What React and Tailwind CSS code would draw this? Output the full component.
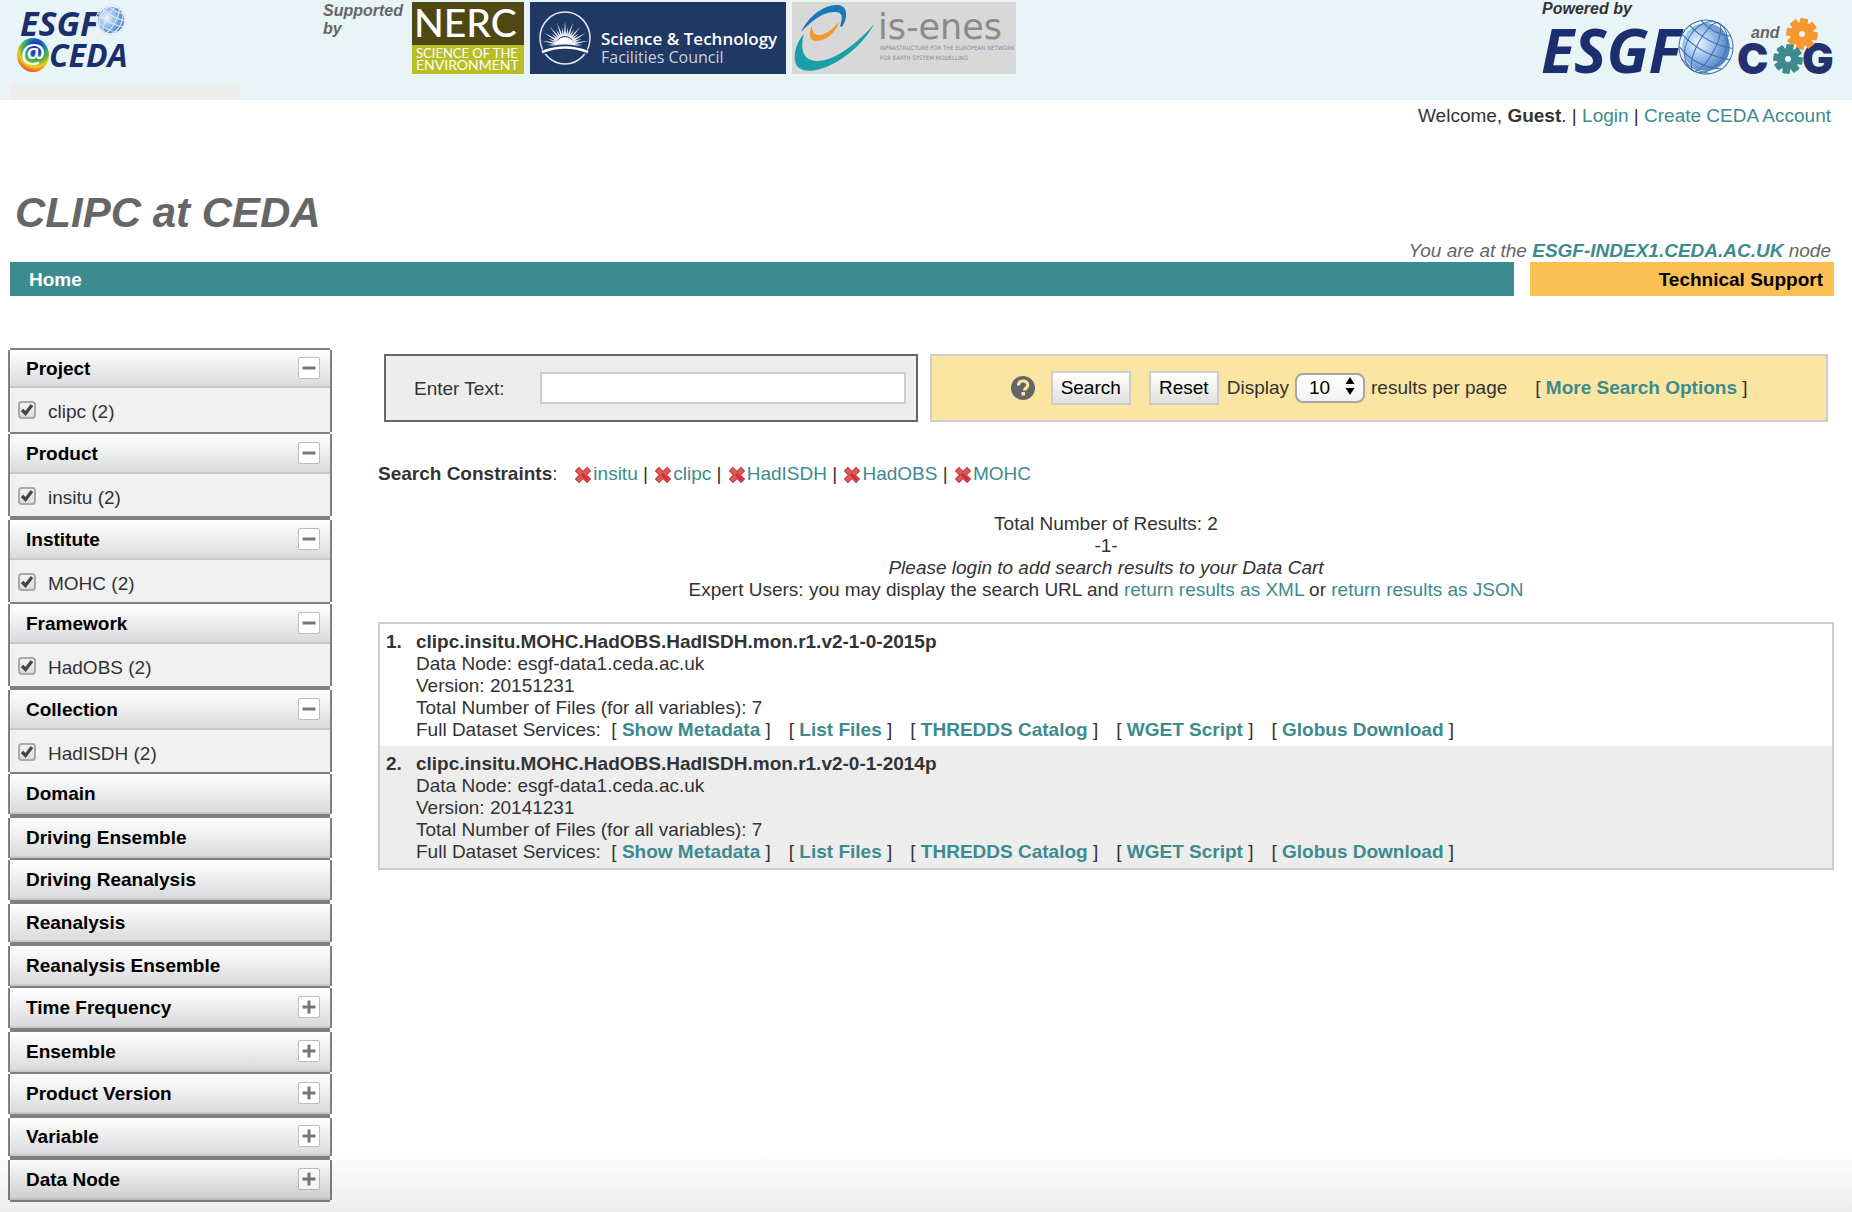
import React from "react";

const NB = "\u00a0";

const facets = [
  { name: "Project", option: "clipc (2)", short: true },
  { name: "Product", option: "insitu (2)", thick: true },
  { name: "Institute", option: "MOHC (2)" },
  { name: "Framework", option: "HadOBS (2)", thick: true },
  { name: "Collection", option: "HadISDH (2)" },
  { name: "Domain", thick: true },
  { name: "Driving Ensemble" },
  { name: "Driving Reanalysis", thick: true },
  { name: "Reanalysis", thick: true, short: true },
  { name: "Reanalysis Ensemble" },
  { name: "Time Frequency", more: true, thick: true },
  { name: "Ensemble", more: true },
  { name: "Product Version", more: true, thick: true },
  { name: "Variable", more: true, thick: true, short: true },
  { name: "Data Node", more: true },
];

const constraints = ["insitu", "clipc", "HadISDH", "HadOBS", "MOHC"];

const results = [
  { id: "clipc.insitu.MOHC.HadOBS.HadISDH.mon.r1.v2-1-0-2015p", version: "20151231" },
  { id: "clipc.insitu.MOHC.HadOBS.HadISDH.mon.r1.v2-0-1-2014p", version: "20141231" },
];

const services = ["Show Metadata", "List Files", "THREDDS Catalog", "WGET Script", "Globus Download"];

function Globe({ id, cx, cy, r, line, width }) {
  return (
    <g transform={`translate(${cx} ${cy}) rotate(28)`}>
      <defs>
        <radialGradient id={id} cx="0.32" cy="0.5" r="0.75">
          <stop offset="0" stopColor="#eef6ff" />
          <stop offset="0.4" stopColor="#9cc3ec" />
          <stop offset="1" stopColor="#3a6cb5" />
        </radialGradient>
      </defs>
      <circle r={r * 0.88} fill={`url(#${id})`} />
      <g fill="none" stroke={line} strokeWidth={width}>
        <circle r={r} />
        <ellipse rx={r * 0.72} ry={r} />
        <ellipse rx={r * 0.32} ry={r} />
        <path d={`M${-r} 0 Q0 ${r * 0.35} ${r} 0`} />
        <path d={`M${-r * 0.9} ${-r * 0.42} Q0 ${-r * 0.12} ${r * 0.9} ${-r * 0.42}`} />
        <path d={`M${-r * 0.88} ${r * 0.45} Q0 ${r * 0.85} ${r * 0.88} ${r * 0.45}`} />
        <path d={`M${-r * 0.62} ${-r * 0.78} Q0 ${-r * 0.55} ${r * 0.62} ${-r * 0.78}`} />
        <path d={`M${-r * 0.6} ${r * 0.8} Q0 ${r * 1.02} ${r * 0.6} ${r * 0.8}`} />
      </g>
    </g>
  );
}

function EsgfCedaLogo() {
  return (
    <svg className="overflow-visible" width="130" height="74" viewBox="0 0 130 74" role="img" aria-label="ESGF at CEDA">
      <defs>
        <radialGradient id="rainbow" cx="0.58" cy="0.28" r="0.78">
          <stop offset="0" stopColor="#1420a8" />
          <stop offset="0.28" stopColor="#1c50c8" />
          <stop offset="0.42" stopColor="#25a08a" />
          <stop offset="0.56" stopColor="#6cb82c" />
          <stop offset="0.72" stopColor="#f0d020" />
          <stop offset="0.86" stopColor="#ee7a1c" />
          <stop offset="1" stopColor="#d42020" />
        </radialGradient>
      </defs>
      <text x="10" y="36" fill="#1b2f6e" fontFamily="Open Sans" fontSize="34" fontWeight="700" fontStyle="italic">ESGF</text>
      <Globe id="globe-small" cx={101} cy={20} r={15} line="#dfeaf5" width={1} />
      <ellipse cx="23" cy="55" rx="16" ry="17" fill="url(#rainbow)" />
      <text x="23" y="63" textAnchor="middle" fill="#fff" fontFamily="Open Sans" fontSize="27" fontWeight="600">@</text>
      <text x="39" y="67" fill="#1b2f6e" fontFamily="Open Sans" fontSize="32" fontWeight="700" fontStyle="italic">CEDA</text>
    </svg>
  );
}

function NercLogo() {
  return (
    <svg className="overflow-visible" width="112" height="72" viewBox="0 0 112 72" role="img" aria-label="NERC Science of the Environment">
      <rect width="112" height="72" fill="#b9be26" />
      <rect width="112" height="43" fill="#4f4815" />
      <g fill="#fff" fontFamily="Lato">
        <text x="2" y="35" fontSize="39" fontWeight="500">NERC</text>
        <text x="4" y="56" fontSize="13">SCIENCE OF THE</text>
        <text x="4" y="68" fontSize="14">ENVIRONMENT</text>
      </g>
    </svg>
  );
}

function StfcLogo() {
  const rays = Array.from({ length: 19 }, (_, i) => {
    const angle = Math.PI * (i / 18);
    const length = i % 2 ? 24 : 18;
    const tip = [35 - Math.cos(angle) * length, 43 - Math.sin(angle) * length];
    const a = [35 - Math.cos(angle - 0.12) * 9, 43 - Math.sin(angle - 0.12) * 9];
    const b = [35 - Math.cos(angle + 0.12) * 9, 43 - Math.sin(angle + 0.12) * 9];
    return `M${a.join(" ")}L${tip.join(" ")}L${b.join(" ")}Z`;
  }).join("");
  return (
    <svg width="256" height="72" viewBox="0 0 256 72" role="img" aria-label="Science and Technology Facilities Council">
      <rect width="256" height="72" fill="#1f3864" />
      <ellipse cx="35" cy="36" rx="25" ry="26" fill="none" stroke="#dfe6f0" strokeWidth="1.5" />
      <path d={rays} fill="#e8edf5" />
      <path d="M25 45a10 10 0 0 1 20 0Z" fill="#fff" />
      <path d="M13 50q22-10 44 0" fill="none" stroke="#1f3864" strokeWidth="5" />
      <path d="M12 50q23-9 46 0" fill="none" stroke="#fff" strokeWidth="2.5" />
      <text x="71" y="43" fill="#fff" fontFamily="Open Sans" fontSize="17" fontWeight="600">Science &amp; Technology</text>
      <text x="71" y="61" fill="#c9d1de" fontFamily="Open Sans" fontSize="16">Facilities Council</text>
    </svg>
  );
}

function IsEnesLogo() {
  return (
    <svg className="overflow-visible" width="224" height="72" viewBox="0 0 224 72" role="img" aria-label="is-enes">
      <rect width="224" height="72" fill="#d8d8d8" />
      <path d="M9 30C16 15 32 2 46 3c9 1 11 11 4 22l-2-1C51 16 51 10 43 10 33 9 20 18 9 30Z" fill="#1878b8" />
      <path d="M20 24c-3 6-4 15 5 15 9 0 19-9 22-19-6 6-12 13-20 13-5 0-7-3-7-9Z" fill="#f3982d" />
      <path d="M12 32C2 43 0 59 6 65c16 14 61-13 76-43C67 40 42 60 24 59 10 58 8 45 12 32Z" fill="#1a9fa8" />
      <g fill="#8a8a8a">
        <text x="86" y="37" fontFamily="DejaVu Sans" fontSize="35">is-enes</text>
        <g fontFamily="Liberation Sans Narrow, DejaVu Sans Condensed" fontSize="6">
          <text x="88" y="48">INFRASTRUCTURE FOR THE EUROPEAN NETWORK</text>
          <text x="88" y="58">FOR EARTH SYSTEM MODELLING</text>
        </g>
      </g>
    </svg>
  );
}

function gearPath(cx, cy, outer, inner, hole) {
  const points = [];
  for (let i = 0; i < 8; i++) {
    const base = (i * Math.PI) / 4 + 0.15;
    [[-0.27, inner], [-0.2, outer], [0.2, outer], [0.27, inner]].forEach(([d, r]) => {
      points.push(`${(cx + Math.cos(base + d) * r).toFixed(2)} ${(cy + Math.sin(base + d) * r).toFixed(2)}`);
    });
  }
  return `M${points.join("L")}Z M${cx - hole} ${cy}a${hole} ${hole} 0 1 0 ${hole * 2} 0a${hole} ${hole} 0 1 0 ${-hole * 2} 0Z`;
}

function EsgfCogLogo() {
  return (
    <svg className="overflow-visible" width="292" height="60" viewBox="0 0 292 60" role="img" aria-label="ESGF and CoG">
      <text x="-1" y="55" fill="#1b2f6e" fontFamily="Open Sans" fontSize="61" fontWeight="700" fontStyle="italic">ESGF</text>
      <Globe id="globe-large" cx={164} cy={29} r={27} line="#3f6fb0" width={1} />
      <text x="209" y="20" fill="#666" fontFamily="Liberation Sans" fontSize="16" fontWeight="700" fontStyle="italic">and</text>
      <g fill="#25316f" fontFamily="Inter" fontSize="42" fontWeight="900">
        <text x="195" y="56">C</text>
        <text x="260" y="56">G</text>
      </g>
      <path d={gearPath(260, 16, 15, 11, 4)} fill="#f7982f" fillRule="evenodd" stroke="#f7982f" strokeWidth="2" strokeLinejoin="round" />
      <path d={gearPath(246, 41, 14, 10, 4)} fill="#3d8b8d" fillRule="evenodd" stroke="#3d8b8d" strokeWidth="2" strokeLinejoin="round" />
    </svg>
  );
}

function RemoveIcon() {
  return (
    <svg className="mx-0.5 inline-block align-[-3px]" width="16" height="16" viewBox="0 0 16 16" aria-hidden="true">
      <g strokeLinecap="square" fill="none">
        <path d="M4 4l8 8M12 4l-8 8" stroke="#b8383c" strokeWidth="6" />
        <path d="M4 4l8 8M12 4l-8 8" stroke="#e2585b" strokeWidth="4" />
        <path d="M8 8l4 4" stroke="#cf2f33" strokeWidth="3" />
      </g>
    </svg>
  );
}

function Link({ children, bold }) {
  return (
    <a href="#" className={bold ? "font-bold text-[#3d8b8d]" : "text-[#3d8b8d]"}>
      {children}
    </a>
  );
}

function Facet({ facet }) {
  const toggle = facet.option || facet.more;
  return (
    <li>
      <div className="border-x-2 border-[#808080]">
        <div
          className={`flex items-center justify-between border-b-2 border-[#c9c9c9] bg-linear-to-b from-white to-[#dadbdd] pr-2.5 pl-4 ${facet.short ? "h-[38px]" : "h-10"}`}
        >
          <h2 className="pt-0.5 font-bold text-black">{facet.name}</h2>
          {toggle && (
            <button
              type="button"
              aria-label={`${facet.option ? "Collapse" : "Expand"} ${facet.name}`}
              className="flex size-[22px] items-center justify-center rounded-xs border border-[#bdbdbd] bg-white"
            >
              <svg width="14" height="14" viewBox="0 0 14 14" stroke="#777" strokeWidth="3" aria-hidden="true">
                <path d={facet.option ? "M0.5 7h13" : "M0.5 7h13M7 0.5v13"} />
              </svg>
            </button>
          )}
        </div>
        {facet.option && (
          <label className={`flex items-start bg-[#f1f1f1] pt-[13px] pl-2 ${facet.short ? "h-11" : "h-[42px]"}`}>
            <span className="relative mr-3 block size-[18px]">
              <input
                type="checkbox"
                defaultChecked
                className="peer block size-[18px] appearance-none rounded border-2 border-[#a9a9a9] bg-linear-to-b from-[#f4f4f4] to-[#dcdcdc]"
              />
              <svg
                className="pointer-events-none absolute inset-0 hidden peer-checked:block"
                width="18"
                height="18"
                viewBox="0 0 18 18"
                fill="none"
                stroke="#444"
                strokeWidth="3.2"
                aria-hidden="true"
              >
                <path d="M4 9l3.5 3.5L14 4" />
              </svg>
            </span>
            {facet.option}
          </label>
        )}
      </div>
      <div className={`mx-0.5 bg-[#808080] ${facet.thick ? "h-1" : "h-0.5"}`} />
    </li>
  );
}

export default function App() {
  return (
    <div className="relative bg-white pb-2.5 font-['Liberation_Sans',Arial,sans-serif] text-[19px] leading-[22px] text-[#333]">
      <header className="flex h-[100px] items-start justify-between bg-[#e8f4f5] pr-[18px] pl-2.5">
        <div className="flex">
          <div className="w-[230px]">
            <EsgfCedaLogo />
            <div className="mt-2.5 h-4 bg-[#ededed]" />
          </div>
          <p className="mt-0.5 ml-[83px] w-[89px] text-[16px] leading-[18px] font-bold text-[#666] italic">
            Supported by
          </p>
          <div className="mt-0.5 flex gap-1.5">
            <NercLogo />
            <StfcLogo />
            <IsEnesLogo />
          </div>
        </div>
        <div>
          <p className="text-[16px] leading-[18px] font-bold italic">Powered by</p>
          <EsgfCogLogo />
        </div>
      </header>

      <p className="mt-[5px] pr-[21px] text-right">
        Welcome, <b>Guest</b>. | <Link>Login</Link> | <Link>Create CEDA Account</Link>
      </p>
      <h1 className="mt-[62px] pl-[15px] text-[42px] leading-[48px] font-bold text-[#666] italic">CLIPC at CEDA</h1>
      <p className="mt-[3px] pr-[21px] text-right text-[#666] italic">
        You are at the <Link bold>ESGF-INDEX1.CEDA.AC.UK</Link> node
      </p>

      <nav className="mr-[18px] ml-2.5 flex h-[34px] gap-4 font-bold">
        <div className="flex flex-1 items-center bg-[#3d8a8f] px-[19px] pt-px">
          <a href="#" className="text-white">Home</a>
        </div>
        <div className="flex w-[304px] items-center justify-end bg-[#fac056] px-[11px] pt-px">
          <a href="#" className="text-black">Technical Support</a>
        </div>
      </nav>

      <div className="mr-[18px] ml-2 flex items-start pt-[52px]">
        <aside className="w-[324px] shrink-0">
          <div className="mx-0.5 h-0.5 bg-[#808080]" />
          <ul>
            {facets.map((facet) => (
              <Facet key={facet.name} facet={facet} />
            ))}
          </ul>
        </aside>

        <main className="ml-[46px] flex-1 pt-1.5">
          <form className="flex h-[68px] gap-3 px-1.5" onSubmit={(e) => e.preventDefault()}>
            <div className="flex w-[37%] items-center border-2 border-[#666] bg-[#ededed] pr-2.5 pl-7">
              <label htmlFor="query" className="w-[126px] shrink-0 pt-0.5">Enter Text:</label>
              <input id="query" type="text" className="h-8 min-w-0 flex-1 border-2 border-[#ccc] bg-white px-2" />
            </div>
            <div className="flex flex-1 items-center justify-center border-2 border-[#ccc] bg-[#fbe5a2] whitespace-nowrap">
              <button type="button" aria-label="Help" className="mr-4">
                <svg width="24" height="24" viewBox="0 0 24 24" aria-hidden="true">
                  <circle cx="12" cy="12" r="12" fill="#666" />
                  <path d="M7.5 9.5C7.5 6.5 9.5 5 12 5s4.800 1.500 4.800 4.200c0 2.600-3.200 3-3.200 5.300" fill="none" stroke="#fbe5a2" strokeWidth="3.200" />
                  <rect x="10.500" y="16" width="3.500" height="3.500" fill="#fbe5a2" />
                </svg>
              </button>
              <button type="submit" className="mr-[18px] h-[34px] w-20 border-2 border-[#ccc] bg-linear-to-b from-white to-[#e0e0e0] text-black">
                Search
              </button>
              <button type="reset" className="mr-2 h-[34px] w-[70px] border-2 border-[#ccc] bg-linear-to-b from-white to-[#e0e0e0] text-black">
                Reset
              </button>
              <label htmlFor="per-page">Display</label>
              <span className="relative mx-1.5 block">
                <select
                  id="per-page"
                  defaultValue="10"
                  className="block h-[30px] w-[70px] appearance-none rounded-lg border-2 border-[#a6a6a6] bg-linear-to-b from-white to-[#f2f2f2] pl-3 text-black"
                >
                  <option>10</option>
                  <option>20</option>
                  <option>50</option>
                </select>
                <svg className="pointer-events-none absolute top-1 right-2.5" width="10" height="18" viewBox="0 0 10 18" aria-hidden="true">
                  <path d="M5 0l4.500 7h-9ZM5 18l4.500-7h-9Z" />
                </svg>
              </span>
              <span>results per page</span>
              <span className="ml-7">
                [ <Link bold>More Search Options</Link> ]
              </span>
            </div>
          </form>

          <p className="mt-[41px]">
            <b>Search Constraints</b>:{NB}{NB}{" "}
            {constraints.map((name, i) => (
              <React.Fragment key={name}>
                {i > 0 && " | "}
                <a href="#" className="text-[#3d8b8d]">
                  <RemoveIcon />
                  {name}
                </a>
              </React.Fragment>
            ))}
          </p>

          <div className="mt-7 text-center">
            <p>Total Number of Results: 2</p>
            <p>-1-</p>
            <p className="italic">Please login to add search results to your Data Cart</p>
            <p>
              Expert Users: you may display the search URL and <Link>return results as XML</Link> or{" "}
              <Link>return results as JSON</Link>
            </p>
          </div>

          <ol className="mt-[21px] border-2 border-[#ccc]">
            {results.map((result, i) => (
              <li key={result.id} className="flex pt-[7px] pb-[5px] pl-1.5 even:bg-[#ededed]">
                <b className="w-[30px] shrink-0">{i + 1}.</b>
                <div>
                  <h3 className="font-bold">{result.id}</h3>
                  <p>Data Node: esgf-data1.ceda.ac.uk</p>
                  <p>Version: {result.version}</p>
                  <p>Total Number of Files (for all variables): 7</p>
                  <div className="flex flex-wrap gap-x-[18px]">
                    <p>
                      Full Dataset Services:{NB} [ <Link bold>{services[0]}</Link> ]
                    </p>
                    {services.slice(1).map((service) => (
                      <p key={service}>
                        [ <Link bold>{service}</Link> ]
                      </p>
                    ))}
                  </div>
                </div>
              </li>
            ))}
          </ol>
        </main>
      </div>

      <div className="pointer-events-none absolute inset-x-0 bottom-0 h-16 bg-linear-to-b from-transparent to-black/7" />
    </div>
  );
}
